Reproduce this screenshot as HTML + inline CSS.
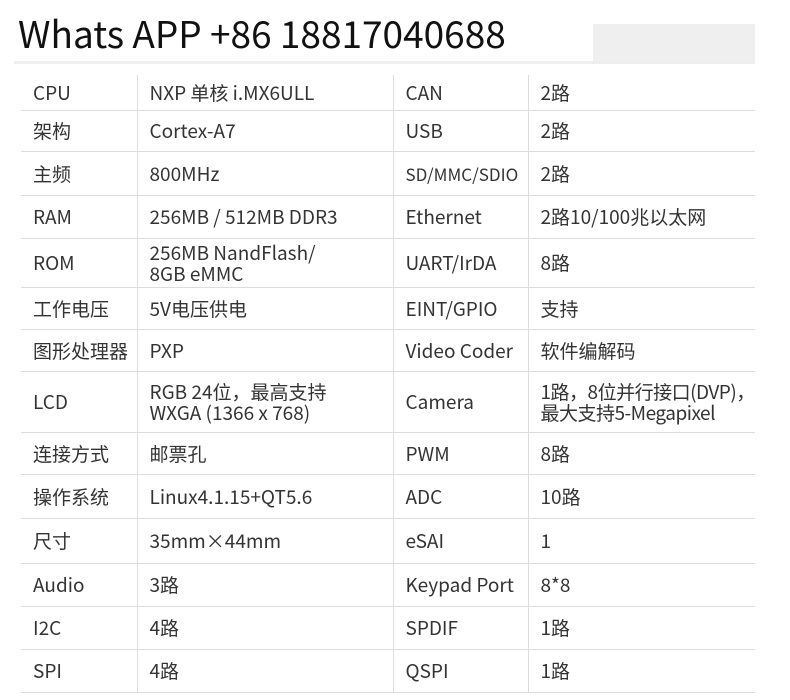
<!DOCTYPE html>
<html><head><meta charset="utf-8"><style>
body{margin:0;background:#fff;width:790px;height:700px;overflow:hidden;font-family:"Noto Sans CJK SC","Liberation Sans",sans-serif;color:#333;}
.h{position:absolute;left:18px;top:7px;font-size:37px;line-height:50px;color:#111;}
.g{position:absolute;left:593px;top:24px;width:162px;height:39px;background:#efefef;}
.u{position:absolute;left:14px;top:61px;width:741px;height:3px;background:#eee;}
table{position:absolute;left:21px;top:75px;width:734px;border-collapse:collapse;font-size:19px;}
td{border-bottom:1px solid #ddd;border-left:1px solid #ddd;padding:0 0 0 12px;line-height:21px;vertical-align:middle;white-space:nowrap;}
td:first-child{border-left:none;}
</style></head><body>
<div class="h">Whats APP +86 18817040688</div>
<div class="g"></div><div class="u"></div>
<table>
<colgroup><col style="width:116px"><col style="width:256px"><col style="width:135px"><col></colgroup>
<tr style="height:35px"><td>CPU</td><td>NXP 单核 i.MX6ULL</td><td>CAN</td><td>2路</td></tr>
<tr style="height:41px"><td>架构</td><td>Cortex-A7</td><td>USB</td><td>2路</td></tr>
<tr style="height:44px"><td>主频</td><td>800MHz</td><td style="font-size:17px">SD/MMC/SDIO</td><td>2路</td></tr>
<tr style="height:43px"><td>RAM</td><td>256MB / 512MB DDR3</td><td>Ethernet</td><td>2路10/100兆以太网</td></tr>
<tr style="height:49px"><td>ROM</td><td>256MB NandFlash/<br>8GB eMMC</td><td>UART/IrDA</td><td>8路</td></tr>
<tr style="height:42px"><td>工作电压</td><td>5V电压供电</td><td>EINT/GPIO</td><td>支持</td></tr>
<tr style="height:42px"><td>图形处理器</td><td>PXP</td><td>Video Coder</td><td>软件编解码</td></tr>
<tr style="height:61px"><td>LCD</td><td>RGB 24位，最高支持<br>WXGA (1366 x 768)</td><td>Camera</td><td style="letter-spacing:-0.5px">1路，8位并行接口(DVP)，<br>最大支持5-Megapixel</td></tr>
<tr style="height:42px"><td>连接方式</td><td>邮票孔</td><td>PWM</td><td>8路</td></tr>
<tr style="height:44px"><td>操作系统</td><td>Linux4.1.15+QT5.6</td><td>ADC</td><td>10路</td></tr>
<tr style="height:45px"><td>尺寸</td><td>35mm×44mm</td><td>eSAI</td><td>1</td></tr>
<tr style="height:43px"><td>Audio</td><td>3路</td><td>Keypad Port</td><td>8*8</td></tr>
<tr style="height:43px"><td>I2C</td><td>4路</td><td>SPDIF</td><td>1路</td></tr>
<tr style="height:43px"><td>SPI</td><td>4路</td><td>QSPI</td><td>1路</td></tr>
</table>
</body></html>
